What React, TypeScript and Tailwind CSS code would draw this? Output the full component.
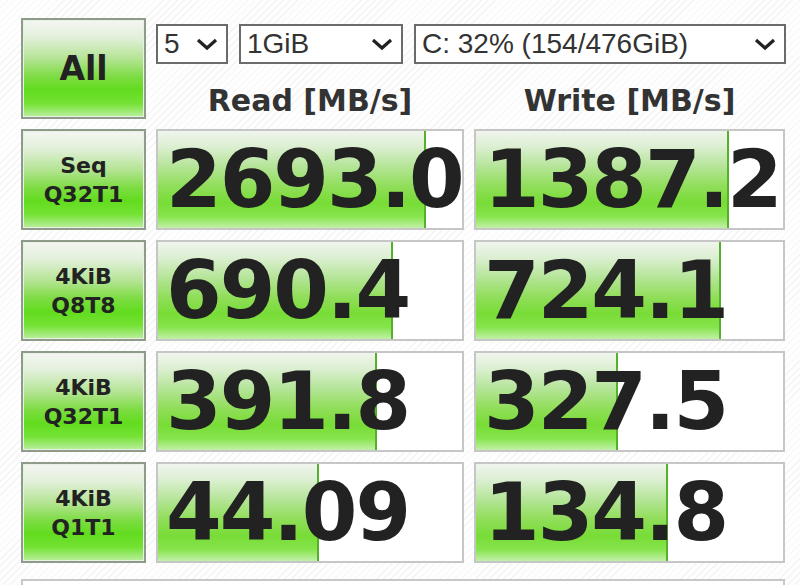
// CrystalDiskMark style results panel
const rows = [
  { a: 'Seq', b: 'Q32T1', read: '2693.0', write: '1387.2', rw: 268, ww: 253 },
  { a: '4KiB', b: 'Q8T8', read: '690.4', write: '724.1', rw: 235, ww: 245 },
  { a: '4KiB', b: 'Q32T1', read: '391.8', write: '327.5', rw: 219, ww: 142 },
  { a: '4KiB', b: 'Q1T1', read: '44.09', write: '134.8', rw: 161, ww: 192 },
];

const greenBtn =
  'border-2 border-[#8e9b8a] bg-[linear-gradient(180deg,#f4f6f2_0%,#e2f0da_18%,#b4e494_40%,#7edc44_58%,#62dc1e_72%,#74e234_86%,#bcefa0_100%)] shadow-[inset_0_0_0_1px_#e8f0e4] flex flex-col items-center justify-center text-[#222] font-bold';

const fill =
  'bg-[linear-gradient(180deg,#f0f5ee_0%,#dcefd2_16%,#b6e59a_36%,#92de5c_56%,#78dc36_74%,#86e44c_88%,#c2f0a8_100%)]';

function Select({ w, text }: { w: string; text: string }) {
  return (
    <div className={`${w} h-[40px] border-2 border-[#6b6b6b] bg-white flex items-center justify-between pl-[6px] pr-[8px]`}>
      <span className="text-[28px] leading-none text-[#333] font-['Liberation_Sans',sans-serif]">{text}</span>
      <svg width="22" height="14" viewBox="0 0 22 14">
        <path d="M2 3 L11 11 L20 3" fill="none" stroke="#222" strokeWidth="3.2" />
      </svg>
    </div>
  );
}

function Cell({ value, width, w }: { value: string; width: number; w: string }) {
  return (
    <div className={`${w} h-[101px] relative border-2 border-[#c6c6c6] bg-white overflow-hidden`}>
      <div className={`absolute left-0 top-0 bottom-0 ${fill} border-r-2 border-[#55b02a]`} style={{ width }} />
      <div className="relative h-full flex items-center pl-[8px] text-[80px] tracking-[-2px] font-bold text-[#222] leading-none font-['DejaVu_Sans',sans-serif]">
        {value}
      </div>
    </div>
  );
}

export default function App() {
  return (
    <div className="w-[800px] h-[585px] overflow-hidden bg-[repeating-linear-gradient(135deg,#f4f4f4_0px,#f4f4f4_1px,#fefefe_1px,#fefefe_5px)] pl-[21px] pt-[18px] font-['DejaVu_Sans',sans-serif]">
      <div className="flex gap-[10px]">
        <div className={`w-[125px] h-[101px] ${greenBtn} text-[33px]`}>All</div>
        <div className="flex flex-col">
          <div className="flex gap-[11px] mt-[6px]">
            <Select w="w-[72px]" text="5" />
            <Select w="w-[164px]" text="1GiB" />
            <Select w="w-[372px]" text="C: 32% (154/476GiB)" />
          </div>
          <div className="flex gap-[10px] mt-[22px]">
            <div className="w-[308px] text-center text-[30px] font-bold text-[#333] leading-none">Read [MB/s]</div>
            <div className="w-[311px] text-center text-[30px] font-bold text-[#333] leading-none">Write [MB/s]</div>
          </div>
        </div>
      </div>

      <div className="flex flex-col gap-[10px] mt-[10px]">
        {rows.map((r, i) => (
          <div key={i} className="flex gap-[10px]">
            <div className={`w-[125px] h-[101px] ${greenBtn} text-[22px] leading-[29px]`}>
              <span>{r.a}</span>
              <span>{r.b}</span>
            </div>
            <Cell value={r.read} width={r.rw} w="w-[308px]" />
            <Cell value={r.write} width={r.ww} w="w-[311px]" />
          </div>
        ))}
      </div>

      <div className="mt-[16px] w-[764px] h-[40px] border-2 border-[#c8c8c8] bg-white" />
    </div>
  );
}
